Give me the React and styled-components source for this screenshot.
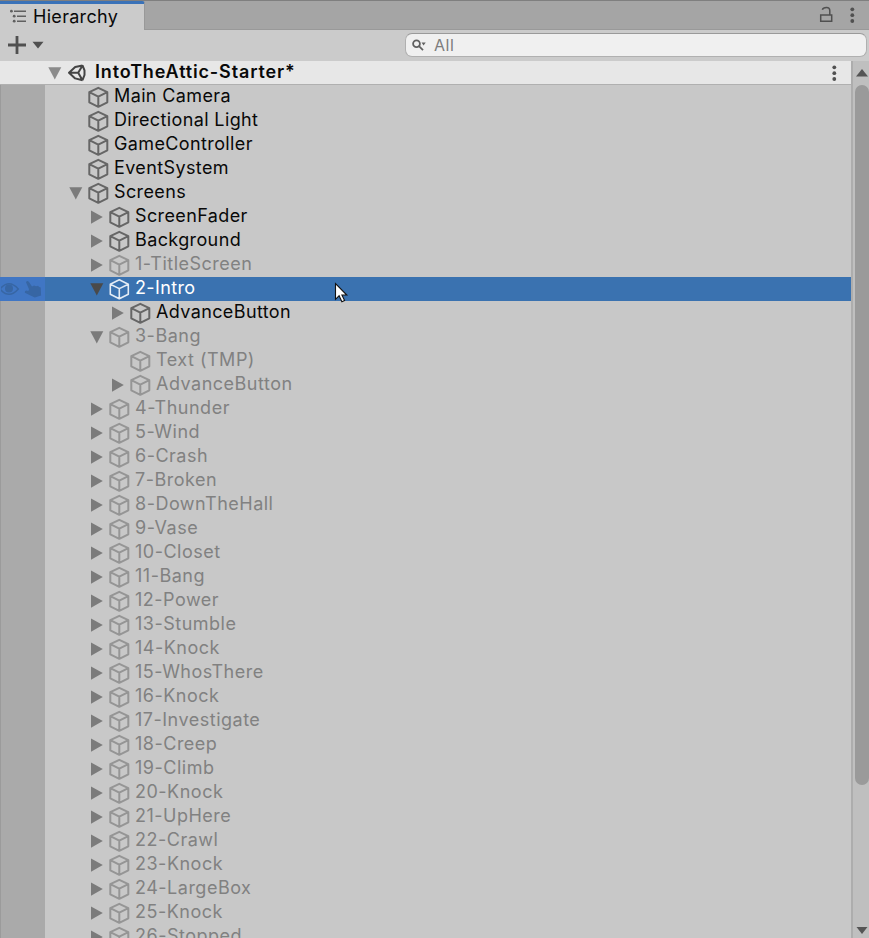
import React from 'react';
import styled, { createGlobalStyle } from 'styled-components';

const GlobalStyle = createGlobalStyle`
  * { box-sizing: border-box; }
  body { margin: 0; overflow: hidden; background: #c8c8c8; }
`;

const Panel = styled.div`
  position: relative;
  width: 869px;
  height: 938px;
  display: flex;
  flex-direction: column;
  overflow: hidden;
  background: #c8c8c8;
  color: #090909;
  font: 400 18px/24px Inter, sans-serif;
`;
const TabBar = styled.div`
  flex: none;
  height: 30px;
  display: flex;
  justify-content: space-between;
  background: #a5a5a5;
  border-top: 1px solid #7f7f7f;
`;
const Tab = styled.div`
  width: 145px;
  height: 29px;
  display: flex;
  align-items: center;
  gap: 7px;
  padding: 0 0 0 10px;
  background: #cbcbcb;
  border-top: 3px solid #3a72b8;
  border-right: 1px solid #999;
  border-radius: 0 3px 0 0;
  letter-spacing: 0.3px;
`;
const TabActions = styled.div`
  flex: 1;
  display: flex;
  justify-content: flex-end;
  gap: 15px;
  padding: 5px 14px 0 0;
  border-bottom: 1px solid #999;
`;
const Toolbar = styled.div`
  flex: none;
  height: 31px;
  display: flex;
  align-items: center;
  justify-content: space-between;
  background: #cbcbcb;
  padding: 0 2px 1px 8px;
`;
const CreateButton = styled.div`
  display: flex;
  align-items: center;
  gap: 6px;
`;
const Search = styled.div`
  width: 462px;
  height: 24px;
  display: flex;
  align-items: center;
  gap: 8px;
  padding-left: 6px;
  border: 1px solid #b0b0b0;
  border-top-color: #9a9a9a;
  border-radius: 7px;
  background: #f0f0f0;
  color: #7d7d7d;
  font-size: 16px;
  letter-spacing: 0.55px;
`;
const Body = styled.div`
  flex: 1;
  min-height: 0;
  display: flex;
`;
const Tree = styled.div`
  width: 851px;
  overflow: hidden;
`;
const SceneRow = styled.div`
  height: 24px;
  display: flex;
  align-items: center;
  padding: 0 14px 0 48px;
  background: #e7e7e7;
  border-bottom: 1px solid #b0b0b0;
  font-weight: 600;
  letter-spacing: 0.85px;
`;
const SceneName = styled.span`
  flex: 1;
  margin: -2px 0 0 8px;
`;
const Row = styled.div`
  height: 24px;
  display: flex;
  background: ${p => (p.$selected ? '#3a72b0' : '#c8c8c8')};
  color: ${p => (p.$selected ? '#fff' : p.$dim ? '#818181' : '#090909')};
  letter-spacing: ${p => (p.$dim ? 0.5 : 0.38)}px;
`;
const Gutter = styled.div`
  width: 45px;
  flex: none;
  display: flex;
  align-items: center;
  gap: 4px;
  background: ${p => (p.$selected ? '#4076c4' : '#aaaaaa')};
  border-left: 1px solid ${p => (p.$selected ? '#4076c4' : '#9b9b9b')};
`;
const Item = styled.div`
  display: flex;
  padding-left: ${p => 24 + p.$level * 21}px;
`;
const Fold = styled.svg`
  flex: none;
  width: 14px;
  height: 24px;
  fill: ${p => p.$fill};
`;
const Cube = styled.svg`
  flex: none;
  width: 22px;
  height: 24px;
  margin-left: 4px;
  fill: none;
  stroke: ${p => (p.$selected ? '#e4ecf5' : p.$dim ? '#959595' : '#666')};
  stroke-width: ${p => (p.$selected ? 1.6 : 2)};
  stroke-linejoin: round;
`;
const Label = styled.span`
  margin: -1px 0 0 5px;
  white-space: pre;
`;
const ScrollBar = styled.div`
  width: 18px;
  display: flex;
  flex-direction: column;
  align-items: flex-end;
  background: #bfbfbf;
  border-left: 2px solid #adadad;
`;
const Thumb = styled.div`
  width: 14px;
  height: 700px;
  border-radius: 7px;
  background: #9a9a9a;
`;
const ScrollArrow = styled.svg`
  width: 14px;
  height: ${p => p.$h}px;
  fill: #555;
  margin-top: ${p => p.$top || 0};
`;
const Icon = styled.svg`
  flex: none;
  display: block;
`;
const Pointer = styled.svg`
  position: absolute;
  left: 334px;
  top: 282px;
`;

const nodes = [
  [1, '', 'Main Camera'], [1, '', 'Directional Light'], [1, '', 'GameController'],
  [1, '', 'EventSystem'], [1, 'open', 'Screens'], [2, 'closed', 'ScreenFader'],
  [2, 'closed', 'Background'], [2, 'closed', '1-TitleScreen', 'dim'],
  [2, 'open', '2-Intro', 'selected'], [3, 'closed', 'AdvanceButton'],
  [2, 'open', '3-Bang', 'dim'], [3, '', 'Text (TMP)', 'dim'],
  [3, 'closed', 'AdvanceButton', 'dim'],
  ...['4-Thunder', '5-Wind', '6-Crash', '7-Broken', '8-DownTheHall', '9-Vase',
    '10-Closet', '11-Bang', '12-Power', '13-Stumble', '14-Knock', '15-WhosThere',
    '16-Knock', '17-Investigate', '18-Creep', '19-Climb', '20-Knock', '21-UpHere',
    '22-Crawl', '23-Knock', '24-LargeBox', '25-Knock', '26-Stopped',
  ].map(n => [2, 'closed', n, 'dim']),
];

function FoldArrow({ state, fill = '#7b7b7b' }) {
  return (
    <Fold $fill={fill} viewBox="0 0 14 24">
      {state === 'open' && <path d="M.3 6.2h13L6.8 18.5z" />}
      {state === 'closed' && <path d="M1 5.5v13.2l11.8-6.6z" />}
    </Fold>
  );
}

function Dots() {
  return (
    <Icon width="6" height="18" viewBox="0 0 6 18" fill="#505050">
      <circle cx="3.3" cy="3.3" r="1.9" /><circle cx="3.3" cy="9.2" r="1.9" /><circle cx="3.3" cy="15" r="1.9" />
    </Icon>
  );
}

function TreeRow({ node: [level, fold, name, state] }) {
  const selected = state === 'selected';
  const dim = state === 'dim';
  return (
    <Row $selected={selected} $dim={dim}>
      <Gutter $selected={selected}>
        {selected && <>
          <Icon width="19" height="14" viewBox="0 0 19 14" fill="none" stroke="#3766a4" strokeWidth="1.5">
            <path d="M-1 7Q8-3.5 17.3 7 8 17.5-1 7z" /><circle cx="8" cy="6.5" r="4" fill="#3766a4" stroke="none" />
          </Icon>
          <Icon width="18" height="18" viewBox="0 0 18 18" fill="#3766a4">
            <path d="M2 2.2Q3.2-.2 5 2L8 6.4l2-.9 2 .7 2-.5 1.2 1.2 1.5.5.4 8-6.3 2L7 15.7.9 12.8Q.5 11 2.3 10.6l2.1.4L5 9.2z" />
          </Icon>
        </>}
      </Gutter>
      <Item $level={level - 1}>
        <FoldArrow state={fold} fill={selected ? '#4a4a4a' : '#7b7b7b'} />
        <Cube $selected={selected} $dim={dim} viewBox="0 0 22 24">
          <path d="M11.3 2.8l9 4.4v10.1l-9 4.5-9-4.5V7.2zM2.3 7.2l9 4.4 9-4.4M11.3 11.6v10.2" />
        </Cube>
        <Label>{name}</Label>
      </Item>
    </Row>
  );
}

export default function App() {
  return (
    <>
      <GlobalStyle />
      <Panel>
        <TabBar>
          <Tab>
            <Icon width="16" height="16" viewBox="0 0 16 16" stroke="#606060" fill="#606060" strokeWidth="1.4">
              <path d="M4 2.2h12M7 7.2h9M7 12.2h9" />
              <g stroke="none"><circle cx="1.4" cy="2.2" r="1.4" /><circle cx="4.2" cy="7.2" r="1.4" /><circle cx="4.2" cy="12.2" r="1.4" /></g>
            </Icon>
            Hierarchy
          </Tab>
          <TabActions>
            <Icon width="16" height="18" viewBox="0 0 16 18" fill="none" stroke="#505050" strokeWidth="1.5">
              <path d="M2.7 9h11v6.2h-11zM4.3 3.7Q5 1.6 8.5 1.6q3.3 0 3.3 3.2V9" />
            </Icon>
            <Dots />
          </TabActions>
        </TabBar>
        <Toolbar>
          <CreateButton>
            <Icon width="18" height="18" viewBox="0 0 18 18" stroke="#505050" strokeWidth="2.8"><path d="M9 0v18M0 9h18" /></Icon>
            <Icon width="12" height="8" viewBox="0 0 12 8" fill="#505050"><path d="M.5.8h11L6 7.6z" /></Icon>
          </CreateButton>
          <Search>
            <Icon width="14" height="12" viewBox="0 0 14 12" stroke="#606060" fill="none" strokeWidth="1.8">
              <circle cx="4.5" cy="4.8" r="3.4" /><path d="M7 7.2l4 4" /><path d="M9.5 3.5h4.2l-2.1 3z" fill="#606060" stroke="none" />
            </Icon>
            All
          </Search>
        </Toolbar>
        <Body>
          <Tree>
            <SceneRow>
              <FoldArrow state="open" fill="#8b8b8b" />
              <Icon width="25" height="20" viewBox="-6 0 25 20" stroke="#444" fill="none" strokeWidth="2" strokeLinejoin="round">
                <path d="M14.5 2.4L7.2 4 1 9.7l6.2 5.7 7.3 1.8M14.5 2.4l2 5v4.6l-2 5.2M1 9.7h9.2l4.3-7.3M10.2 9.7l4.3 7.5" />
              </Icon>
              <SceneName>IntoTheAttic-Starter*</SceneName>
              <Dots />
            </SceneRow>
            {nodes.map((node, i) => <TreeRow key={i} node={node} />)}
          </Tree>
          <ScrollBar>
            <ScrollArrow $h={24} viewBox="0 0 14 24"><path d="M7 8l6 7.5H1z" /></ScrollArrow>
            <Thumb />
            <ScrollArrow $h={20} $top="auto" viewBox="0 0 14 20"><path d="M1.5 9h11L7 16z" /></ScrollArrow>
          </ScrollBar>
        </Body>
        <Pointer width="15" height="21" viewBox="0 0 15 21">
          <path d="M1.5 1.5v15.8l3.6-3.5 2.8 6 2.7-1.2L7.9 13h4.9z" fill="#fff" stroke="#111" strokeWidth="1.1" />
        </Pointer>
      </Panel>
    </>
  );
}
